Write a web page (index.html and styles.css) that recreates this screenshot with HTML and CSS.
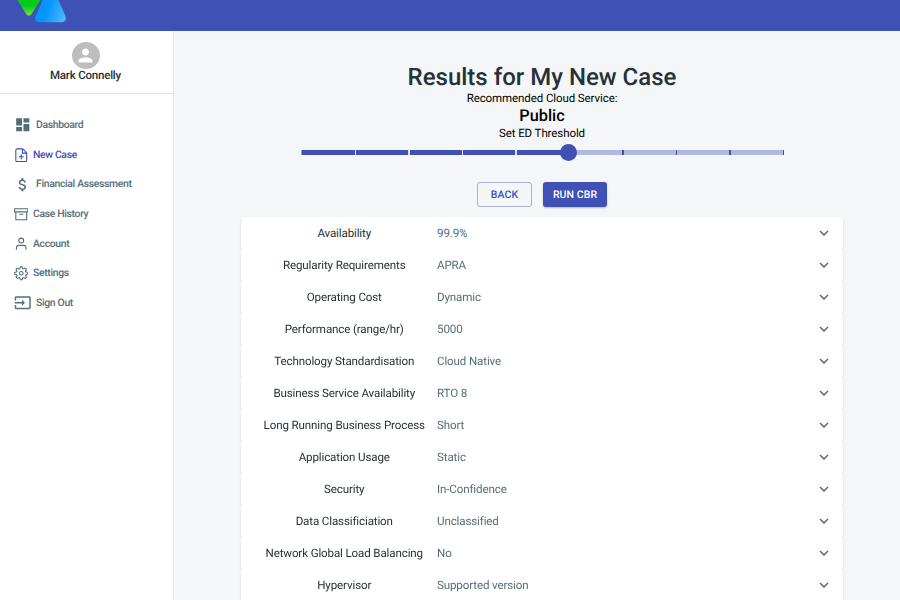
FILE: index.html
```html
<!DOCTYPE html>
<html lang="en">
<head>
<meta charset="utf-8">
<title>Results for My New Case</title>
<link rel="stylesheet" href="styles.css">
</head>
<body>
<header class="topbar">
  <svg class="logo" width="50" height="31" viewBox="0 0 50 31">
    <defs>
      <linearGradient id="g" x1="0" y1="0" x2="0" y2="1"><stop offset="0.5" stop-color="#06cb1c"/><stop offset="1" stop-color="#7de03c"/></linearGradient>
      <linearGradient id="b" x1="0" y1="0.4" x2="1" y2="0.7"><stop offset="0.4" stop-color="#0696fb"/><stop offset="1" stop-color="#4db8fd"/></linearGradient>
    </defs>
    <path fill="url(#g)" d="M-1-4H27L16 13.500Q12.900 17.900 9.800 13.500Z"/>
    <path fill="url(#b)" d="M28-3H41L49.200 15.500Q51.500 22.300 45 22.300H24Q17.200 22 20 15.500Z"/>
  </svg>
</header>
<div class="layout">
  <aside class="sidebar">
    <div class="profile">
      <div class="avatar"><svg width="21" height="21" viewBox="0 0 24 24" fill="#fff"><path d="M12 12c2.210 0 4-1.790 4-4s-1.790-4-4-4-4 1.790-4 4 1.790 4 4 4zm0 2c-2.670 0-8 1.340-8 4v2h16v-2c0-2.660-5.330-4-8-4z"/></svg></div>
      <div class="name">Mark Connelly</div>
    </div>
    <nav class="nav">
      <a class="item wide"><svg viewBox="0 0 24 24" fill="currentColor"><path d="M3 13h8V3H3v10zm0 8h8v-6H3v6zm10 0h8V11h-8v10zm0-18v6h8V3h-8z"/></svg>Dashboard</a>
      <a class="item active"><svg class="line" viewBox="0 0 24 24"><path d="M14.500 1.500H5a2 2 0 0 0-2 2v17a2 2 0 0 0 2 2h14a2 2 0 0 0 2-2V8zM14 2v6.500h7M12 11v7M8.500 14.500h7"/></svg>New Case</a>
      <a class="item wide"><svg viewBox="0 0 24 24" fill="currentColor"><path d="M11.800 10.900c-2.270-.59-3-1.200-3-2.150 0-1.090 1.010-1.850 2.700-1.850 1.780 0 2.440.85 2.500 2.100h2.210c-.07-1.720-1.120-3.300-3.210-3.810V3h-3v2.160c-1.940.42-3.500 1.680-3.500 3.610 0 2.310 1.910 3.460 4.700 4.130 2.500.6 3 1.480 3 2.410 0 .69-.49 1.790-2.700 1.790-2.060 0-2.870-.92-2.980-2.100h-2.200c.12 2.190 1.760 3.420 3.680 3.830V21h3v-2.150c1.950-.37 3.500-1.500 3.500-3.550 0-2.840-2.430-3.810-4.700-4.400z"/></svg>Financial Assessment</a>
      <a class="item"><svg class="line" viewBox="0 0 24 24"><path d="M1 3h22v5H1zM3 8v13h18V8M9.500 12h5"/></svg>Case History</a>
      <a class="item"><svg class="line" viewBox="0 0 24 24"><path d="M20 22v-2.500a4 4 0 0 0-4-4H8a4 4 0 0 0-4 4v2.500"/><circle cx="12" cy="7.500" r="4"/></svg>Account</a>
      <a class="item"><svg class="line" viewBox="0 0 24 24"><circle cx="12" cy="12" r="3"/><path d="M19.400 15a1.650 1.650 0 0 0 .33 1.820l.06.06a2 2 0 0 1-2.830 2.830l-.06-.06a1.650 1.650 0 0 0-2.820 1.180V21a2 2 0 0 1-4 0v-.09A1.650 1.650 0 0 0 7.180 19.730l-.06.06a2 2 0 0 1-2.830-2.830l.06-.06A1.650 1.650 0 0 0 3.090 14H3a2 2 0 0 1 0-4h.09A1.650 1.650 0 0 0 4.270 7.180l-.06-.06a2 2 0 0 1 2.830-2.830l.06.06A1.650 1.650 0 0 0 10 3.090V3a2 2 0 0 1 4 0v.09a1.650 1.650 0 0 0 2.820 1.180l.06-.06a2 2 0 0 1 2.830 2.830l-.06.06A1.650 1.650 0 0 0 20.910 10H21a2 2 0 0 1 0 4h-.09a1.650 1.650 0 0 0-1.510 1z"/></svg>Settings</a>
      <a class="item wide"><svg viewBox="0 0 24 24" fill="currentColor"><path d="M21 3.010H3c-1.100 0-2 .9-2 2V9h2V4.990h18v14.030H3V15H1v4.010c0 1.100.9 1.980 2 1.980h18c1.100 0 2-.88 2-1.980v-14c0-1.110-.9-2-2-2zM11 16l4-4-4-4v3H1v2h10v3z"/></svg>Sign Out</a>
    </nav>
  </aside>
  <main class="main">
    <h1>Results for My New Case</h1>
    <div class="text">Recommended Cloud Service:</div>
    <div class="service">Public</div>
    <div class="text">Set ED Threshold</div>
    <div class="slider">
      <div class="fill"></div>
      <i class="mark on" style="left:0%"></i><i class="mark on" style="left:11.11%"></i><i class="mark on" style="left:22.22%"></i><i class="mark on" style="left:33.33%"></i><i class="mark on" style="left:44.44%"></i><i class="mark" style="left:66.67%"></i><i class="mark" style="left:77.78%"></i><i class="mark" style="left:88.89%"></i><i class="mark" style="left:100%"></i>
      <span class="thumb"></span>
    </div>
    <div class="actions"><button class="btn back">BACK</button><button class="btn run">RUN CBR</button></div>
    <div class="panels" id="panels"></div>
  </main>
</div>
<script src="panels.js"></script>
</body>
</html>
```
FILE: styles.css
```css
* { box-sizing: border-box; }
body { margin: 0; height: 600px; overflow: hidden; background: #f4f6f8; font-family: Roboto, "Liberation Sans", sans-serif; color: #000; text-rendering: geometricPrecision; }
.topbar { height: 31px; background: #3f51b5; padding-left: 16px; }
.logo { display: block; }
.layout { display: flex; height: 569px; }
.sidebar { width: 174px; flex: none; background: #fff; border-right: 1px solid #e4e5e7; }
.profile { height: 63px; padding: 11px 2px 0 0; border-bottom: 1px solid #e0e0e0; display: flex; flex-direction: column; align-items: center; }
.avatar { width: 28px; height: 27px; border-radius: 50%; background: #bdbdbd; display: flex; align-items: center; justify-content: center; flex: none; }
.name { font-size: 11.500px; letter-spacing: -.2px; line-height: 13px; font-weight: 500; color: #263238; }
.nav { padding: 16.300px 13.500px 0; }
.item { display: flex; align-items: center; gap: 5px; height: 29.650px; font-size: 10.400px; letter-spacing: -.33px; line-height: 14px; font-weight: 500; color: #546e7a; white-space: nowrap; }
.item svg { width: 14.500px; height: 14.500px; flex: none; }
.item.wide { gap: 5px; }
.item.wide svg { width: 17.500px; height: 17.500px; }
.item svg.line { fill: none; stroke: currentColor; stroke-width: 1.800; stroke-linejoin: round; stroke-linecap: round; }
.item.active { color: #3f51b5; }
.main { flex: 1; display: flex; flex-direction: column; align-items: center; padding: 32px 0 0 10px; }
h1 { margin: 0; font-size: 24px; line-height: 28px; font-weight: 500; color: #263238; }
.text { font-size: 11.500px; line-height: 14px; letter-spacing: -.09px; }
.service { font-size: 16.300px; line-height: 20px; margin-top: 1px; font-weight: 500; }
.slider { position: relative; width: 481.500px; height: 5.500px; margin: 9.500px 0 0; background: #b1b8e0; flex: none; }
.fill { width: 55.500%; height: 100%; background: #3f51b5; }
.mark { position: absolute; top: 0; width: 1.400px; height: 100%; background: #3f51b5; }
.mark.on { background: #e0e3f3; }
.mark.on:nth-child(2) { background: #8f9ad3; width: 1px; }
.thumb { position: absolute; left: calc(55.500% - 8.200px); top: -5.500px; width: 17px; height: 17px; border-radius: 50%; background: #3f51b5; }
.actions { display: flex; gap: 11px; margin-top: 27px; }
.btn { height: 24.500px; padding: 0; border-radius: 3px; font: 500 10.500px Roboto, sans-serif; letter-spacing: .08px; text-rendering: geometricPrecision; }
.back { width: 55px; border: 1px solid #a7b0db; background: transparent; color: #3f51b5; }
.run { width: 64px; border: 0; background: #3f51b5; color: #fff; box-shadow: 0 1px 2px rgba(0,0,0,.25); }
.panels { width: 602px; margin-top: 10.500px; flex: none; filter: drop-shadow(0 1px 1px rgba(0,0,0,.13)); }
.panel { display: flex; align-items: center; height: 32px; background: #fff; border-radius: 2px; padding: 0 10px 0 16px; font-size: 11.600px; letter-spacing: -.14px; line-height: 14px; }
.label { width: 174.500px; text-align: center; color: #263238; white-space: nowrap; }
.value { flex: 1; padding-left: 5.500px; color: #546e7a; }
.panel svg { width: 18px; height: 18px; fill: #666; }
```
FILE: panels.js
```js
const rows = [
  ["Availability", "99.9%"],
  ["Regularity Requirements", "APRA"],
  ["Operating Cost", "Dynamic"],
  ["Performance (range/hr)", "5000"],
  ["Technology Standardisation", "Cloud Native"],
  ["Business Service Availability", "RTO 8"],
  ["Long Running Business Process", "Short"],
  ["Application Usage", "Static"],
  ["Security", "In-Confidence"],
  ["Data Classificiation", "Unclassified"],
  ["Network Global Load Balancing", "No"],
  ["Hypervisor", "Supported version"]
];
document.getElementById("panels").innerHTML = rows.map(([label, value]) =>
  `<div class="panel"><span class="label">${label}</span><span class="value">${value}</span><svg viewBox="0 0 24 24"><path d="M16.590 8.590L12 13.170 7.410 8.590 6 10l6 6 6-6z"/></svg></div>`
).join("");
```
